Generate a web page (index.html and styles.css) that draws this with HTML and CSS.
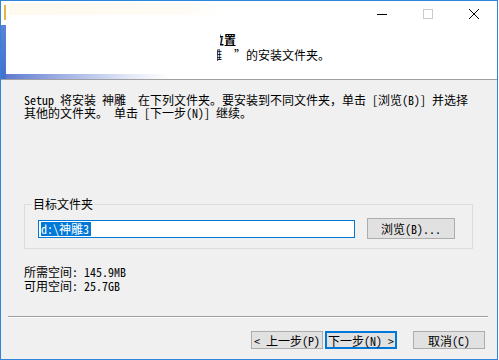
FILE: index.html
```html
<!DOCTYPE html>
<html lang="zh-CN">
<head>
  <meta charset="UTF-8" />
  <title>神雕 安装</title>
  <link rel="stylesheet" href="styles.css">
</head>
<body>
  <div class="window">
    <div class="header">
      <div class="titlebar">
        <span class="tb-btn">
          <svg width="10" height="10" viewBox="0 0 10 10"><path d="M0 5.5H10" stroke="#000" stroke-width="1"/></svg>
        </span>
        <span class="tb-btn">
          <svg width="10" height="10" viewBox="0 0 10 10"><rect x="0.5" y="0.5" width="9" height="9" fill="none" stroke="#cccccc" stroke-width="1"/></svg>
        </span>
        <span class="tb-btn">
          <svg width="10" height="10" viewBox="0 0 10 10"><path d="M0 0L10 10M10 0L0 10" stroke="#000" stroke-width="1"/></svg>
        </span>
      </div>
      <div class="header-text">
        <div class="clip clip-title"><span>选择安装位置</span></div>
        <div class="clip clip-sub"><span>选择“神雕 ”的安装文件夹。</span></div>
      </div>
    </div>

    <div class="content">
      <p class="intro">Setup 将安装 神雕  在下列文件夹。要安装到不同文件夹，单击 [浏览(B)] 并选择
其他的文件夹。 单击 [下一步(N)] 继续。</p>

      <fieldset class="group">
        <legend>目标文件夹</legend>
        <div class="dir-row">
          <div class="dir-input"><span class="sel">d:\神雕3</span></div>
          <button class="btn btn-browse">浏览(B)...</button>
        </div>
      </fieldset>

      <p class="space">所需空间: 145.9MB
可用空间: 25.7GB</p>
    </div>

    <div class="footer">
      <div class="sep"></div>
      <div class="buttons">
        <button class="btn">&lt; 上一步(P)</button>
        <button class="btn btn-focus">下一步(N) &gt;</button>
        <button class="btn btn-cancel">取消(C)</button>
      </div>
    </div>
  </div>
</body>
</html>
```

FILE: styles.css
```css
body {
  margin: 0;
  background: #fff;
  font-family: "Noto Sans Mono CJK SC", "Noto Sans CJK SC", "Liberation Mono", monospace;
  font-size: 12px;
  color: #000;
}
.window {
  box-sizing: border-box;
  width: 498px;
  height: 360px;
  border: 1px solid #2f86d9;
  background: #f0f0f0;
  display: flex;
  flex-direction: column;
}
.header {
  height: 78px;
  background-color: #fff;
  background-image:
    linear-gradient(#e6b548, #e6b548),
    linear-gradient(to right, #fffaee, #fffcf6 85%, #fff),
    linear-gradient(#5c82d8, #4470cf),
    linear-gradient(to right, #5876cf, #9fb0e4 12%, #e4e9f8 26%, #fff 34%);
  background-position: 3px 4px, 8px 2px, 0 24px, 0 73px;
  background-size: 2px 15px, 212px 12px, 5px 54px, 100% 5px;
  background-repeat: no-repeat;
  border-bottom: 1px solid #a0a0a0;
}
.titlebar {
  height: 25px;
  display: flex;
  justify-content: flex-end;
}
.tb-btn {
  width: 46px;
  display: flex;
  align-items: center;
  justify-content: center;
}
.header-text {
  margin: 6px 0 0 216px;
}
.clip {
  display: flex;
  justify-content: flex-end;
  overflow: hidden;
  white-space: pre;
}
.clip-title {
  margin-left: 3px;
  width: 16px;
  font-weight: bold;
  line-height: 15px;
}
.clip-sub {
  width: 113px;
  margin-top: 1px;
  line-height: 14px;
  font-feature-settings: "fwid";
}
.content {
  flex: 1;
  padding: 13px 24px 0 23px;
}
.intro {
  margin: 0;
  line-height: 13px;
  white-space: pre;
}
.group {
  margin: 79px 0 0;
  padding: 8px 17px 9px 13px;
  border: 1px solid #dcdcdc;
  min-width: 0;
}
.group legend {
  margin-left: -6px;
  padding: 0 1px;
  line-height: 12px;
}
.dir-row {
  display: flex;
  align-items: center;
  justify-content: space-between;
}
.dir-input {
  box-sizing: border-box;
  width: 317px;
  height: 18px;
  border: 1px solid #0078d7;
  background: #fff;
  padding: 1px 0 0 2px;
  line-height: 14px;
}
.sel {
  display: inline-block;
  background: #0078d7;
  color: #fff;
  padding-right: 2px;
}
.btn {
  box-sizing: border-box;
  font: inherit;
  color: #000;
  background: #e1e1e1;
  border: 1px solid #adadad;
  padding: 0;
  width: 72px;
  height: 18px;
  line-height: 15px;
}
.btn-browse {
  width: 88px;
  height: 21px;
}
.btn-focus {
  border: 2px solid #0078d7;
}
.btn-cancel {
  margin-left: 14px;
}
.space {
  margin: 16px 0 0;
  line-height: 14px;
  white-space: pre;
}
.footer {
  padding: 0 9px 10px 7px;
}
.sep {
  border-top: 1px solid #a0a0a0;
  border-bottom: 1px solid #fff;
}
.buttons {
  margin-top: 13px;
  display: flex;
  justify-content: flex-end;
  gap: 2px;
  padding-right: 3px;
}
```
